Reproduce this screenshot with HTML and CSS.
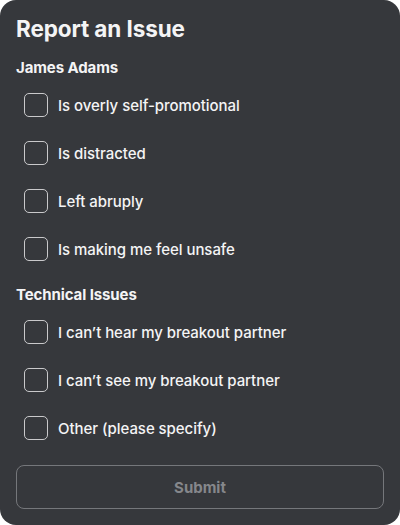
FILE: index.html
```html
<!DOCTYPE html>
<html lang="en">
<head>
  <meta charset="UTF-8" />
  <title>Report an Issue</title>
  <link rel="stylesheet" href="styles.css">
</head>
<body>
  <form class="report">
    <h1>Report an Issue</h1>

    <h2>James Adams</h2>
    <label class="option"><input type="checkbox"><span class="box"></span>Is overly self-promotional</label>
    <label class="option"><input type="checkbox"><span class="box"></span>Is distracted</label>
    <label class="option"><input type="checkbox"><span class="box"></span>Left abruply</label>
    <label class="option"><input type="checkbox"><span class="box"></span>Is making me feel unsafe</label>

    <h2 class="second">Technical Issues</h2>
    <label class="option"><input type="checkbox"><span class="box"></span>I can’t hear my breakout partner</label>
    <label class="option"><input type="checkbox"><span class="box"></span>I can’t see my breakout partner</label>
    <label class="option"><input type="checkbox"><span class="box"></span>Other (please specify)</label>

    <button type="button" class="submit" disabled>Submit</button>
  </form>
</body>
</html>
```

FILE: styles.css
```css
body {
  margin: 0;
  background-color: #fff;
  font-family: Inter, "Open Sans", sans-serif;
}

.report {
  box-sizing: border-box;
  width: 400px;
  height: 525px;
  padding: 14px 16px 16px;
  background-color: #36383c;
  border-radius: 16px;
  color: #f4f4f5;
  display: flex;
  flex-direction: column;
}

.report h1 {
  margin: 0;
  font-size: 22.5px;
  line-height: 30px;
  font-weight: 700;
  letter-spacing: -0.1px;
}

.report h2 {
  margin: 14px 0 3px;
  font-size: 15px;
  line-height: 20px;
  font-weight: 700;
  letter-spacing: -0.1px;
}

.report h2.second {
  margin-top: 12px;
}

.option {
  display: flex;
  align-items: center;
  gap: 10px;
  height: 48px;
  padding-left: 8px;
  font-size: 15px;
  font-weight: 500;
  letter-spacing: -0.05px;
  cursor: pointer;
}

.option input {
  display: none;
}

.box {
  box-sizing: border-box;
  width: 24px;
  height: 24px;
  border: 1.5px solid #c9c9cb;
  border-radius: 5px;
}

.submit {
  margin-top: auto;
  height: 44px;
  background: transparent;
  border: 1px solid #75777b;
  border-radius: 8px;
  color: #85878b;
  font-family: inherit;
  font-size: 15px;
  font-weight: 700;
}
```
